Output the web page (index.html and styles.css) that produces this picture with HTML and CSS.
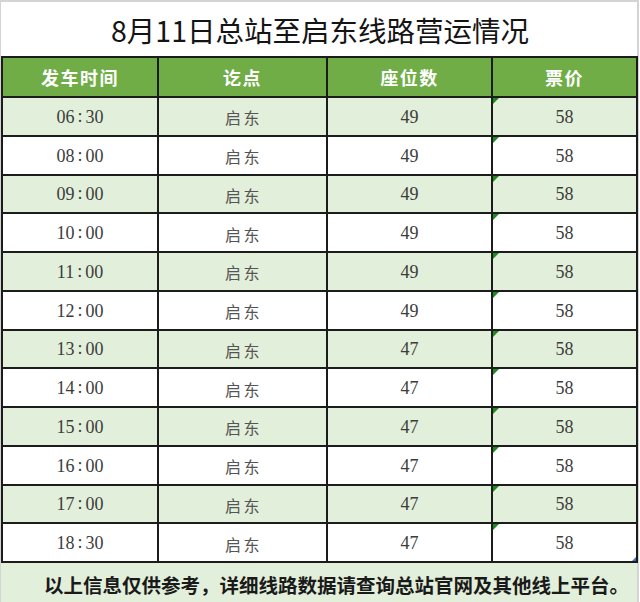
FILE: index.html
```html
<!DOCTYPE html>
<html lang="zh-CN">
<head>
<meta charset="utf-8">
<title>8月11日总站至启东线路营运情况</title>
<link rel="stylesheet" href="styles.css">
</head>
<body>
<div class="sheet">
  <div class="title">8月11日总站至启东线路营运情况</div>
  <table class="grid">
    <colgroup>
      <col class="c1"><col class="c2"><col class="c3"><col class="c4">
    </colgroup>
    <thead>
      <tr><th>发车时间</th><th>讫点</th><th>座位数</th><th>票价</th></tr>
    </thead>
    <tbody>
      <tr class="alt"><td class="num">06<span class="colon">:</span>30</td><td class="cjk">启东</td><td class="num">49</td><td class="num price">58</td></tr>
      <tr><td class="num">08<span class="colon">:</span>00</td><td class="cjk">启东</td><td class="num">49</td><td class="num price">58</td></tr>
      <tr class="alt"><td class="num">09<span class="colon">:</span>00</td><td class="cjk">启东</td><td class="num">49</td><td class="num price">58</td></tr>
      <tr><td class="num">10<span class="colon">:</span>00</td><td class="cjk">启东</td><td class="num">49</td><td class="num price">58</td></tr>
      <tr class="alt"><td class="num">11<span class="colon">:</span>00</td><td class="cjk">启东</td><td class="num">49</td><td class="num price">58</td></tr>
      <tr><td class="num">12<span class="colon">:</span>00</td><td class="cjk">启东</td><td class="num">49</td><td class="num price">58</td></tr>
      <tr class="alt"><td class="num">13<span class="colon">:</span>00</td><td class="cjk">启东</td><td class="num">47</td><td class="num price">58</td></tr>
      <tr><td class="num">14<span class="colon">:</span>00</td><td class="cjk">启东</td><td class="num">47</td><td class="num price">58</td></tr>
      <tr class="alt"><td class="num">15<span class="colon">:</span>00</td><td class="cjk">启东</td><td class="num">47</td><td class="num price">58</td></tr>
      <tr><td class="num">16<span class="colon">:</span>00</td><td class="cjk">启东</td><td class="num">47</td><td class="num price">58</td></tr>
      <tr class="alt"><td class="num">17<span class="colon">:</span>00</td><td class="cjk">启东</td><td class="num">47</td><td class="num price">58</td></tr>
      <tr><td class="num">18<span class="colon">:</span>30</td><td class="cjk">启东</td><td class="num">47</td><td class="num price last">58</td></tr>
    </tbody>
  </table>
  <div class="note">以上信息仅供参考，详细线路数据请查询总站官网及其他线上平台。</div>
</div>
</body>
</html>
```

FILE: styles.css
```css
* { box-sizing: border-box; }

html, body {
  margin: 0;
  padding: 0;
  background: #ffffff;
}

body {
  width: 640px;
  height: 602px;
  overflow: hidden;
}

.sheet {
  width: 639px;
  border-top: 2px solid #d4d4d4;
  border-left: 1px solid #d4d4d4;
  border-right: 2px solid #d4d4d4;
  height: 602px;
}

.title {
  height: 54px;
  display: flex;
  align-items: center;
  justify-content: center;
  font-family: "Noto Sans CJK SC", "Noto Sans", sans-serif;
  font-size: 28.5px;
  color: #141414;
  padding-left: 2px;
  padding-top: 1px;
}

.grid {
  width: 635px;
  border-collapse: collapse;
  table-layout: fixed;
}

.grid .c1 { width: 156px; }
.grid .c2 { width: 169px; }
.grid .c3 { width: 165px; }
.grid .c4 { width: 145px; }

.grid th,
.grid td {
  border: 2px solid #1c1c1c;
  text-align: center;
  padding: 0;
}

.grid th {
  height: 40px;
  background: #70ad47;
  color: #ffffff;
  font-family: "Noto Sans CJK SC", sans-serif;
  font-weight: 700;
  font-size: 18px;
  letter-spacing: 1.5px;
}

.grid td {
  height: 38.75px;
  background: #ffffff;
  color: #3c3c3c;
  padding-top: 2px;
}

.grid td.num {
  font-family: "Liberation Serif", "Times New Roman", serif;
  font-size: 18px;
}

.grid tr.alt td { background: #e2efda; }

.grid td.cjk {
  font-family: "Noto Sans CJK SC", sans-serif;
  font-size: 16px;
  letter-spacing: 2.5px;
  color: #555555;
  padding-left: 2px;
}

.colon {
  margin: 0 3px;
  position: relative;
  top: -1px;
}

.grid td.price { position: relative; }

.grid td.price::before {
  content: "";
  position: absolute;
  left: 0;
  top: 0;
  border-top: 6px solid #1f8a1f;
  border-right: 6px solid transparent;
}

.grid td.price.last::after {
  content: "";
  position: absolute;
  right: 0;
  bottom: 0;
  border-bottom: 4px solid #4a6fc4;
  border-left: 4px solid transparent;
}

.note {
  height: 42px;
  width: 636px;
  background: #e2efda;
  font-family: "Noto Sans CJK SC", serif;
  font-weight: 700;
  font-size: 19.5px;
  color: #1a1a1a;
  padding-left: 43px;
  padding-top: 9px;
  line-height: 26px;
  white-space: nowrap;
  overflow: hidden;
}
```
